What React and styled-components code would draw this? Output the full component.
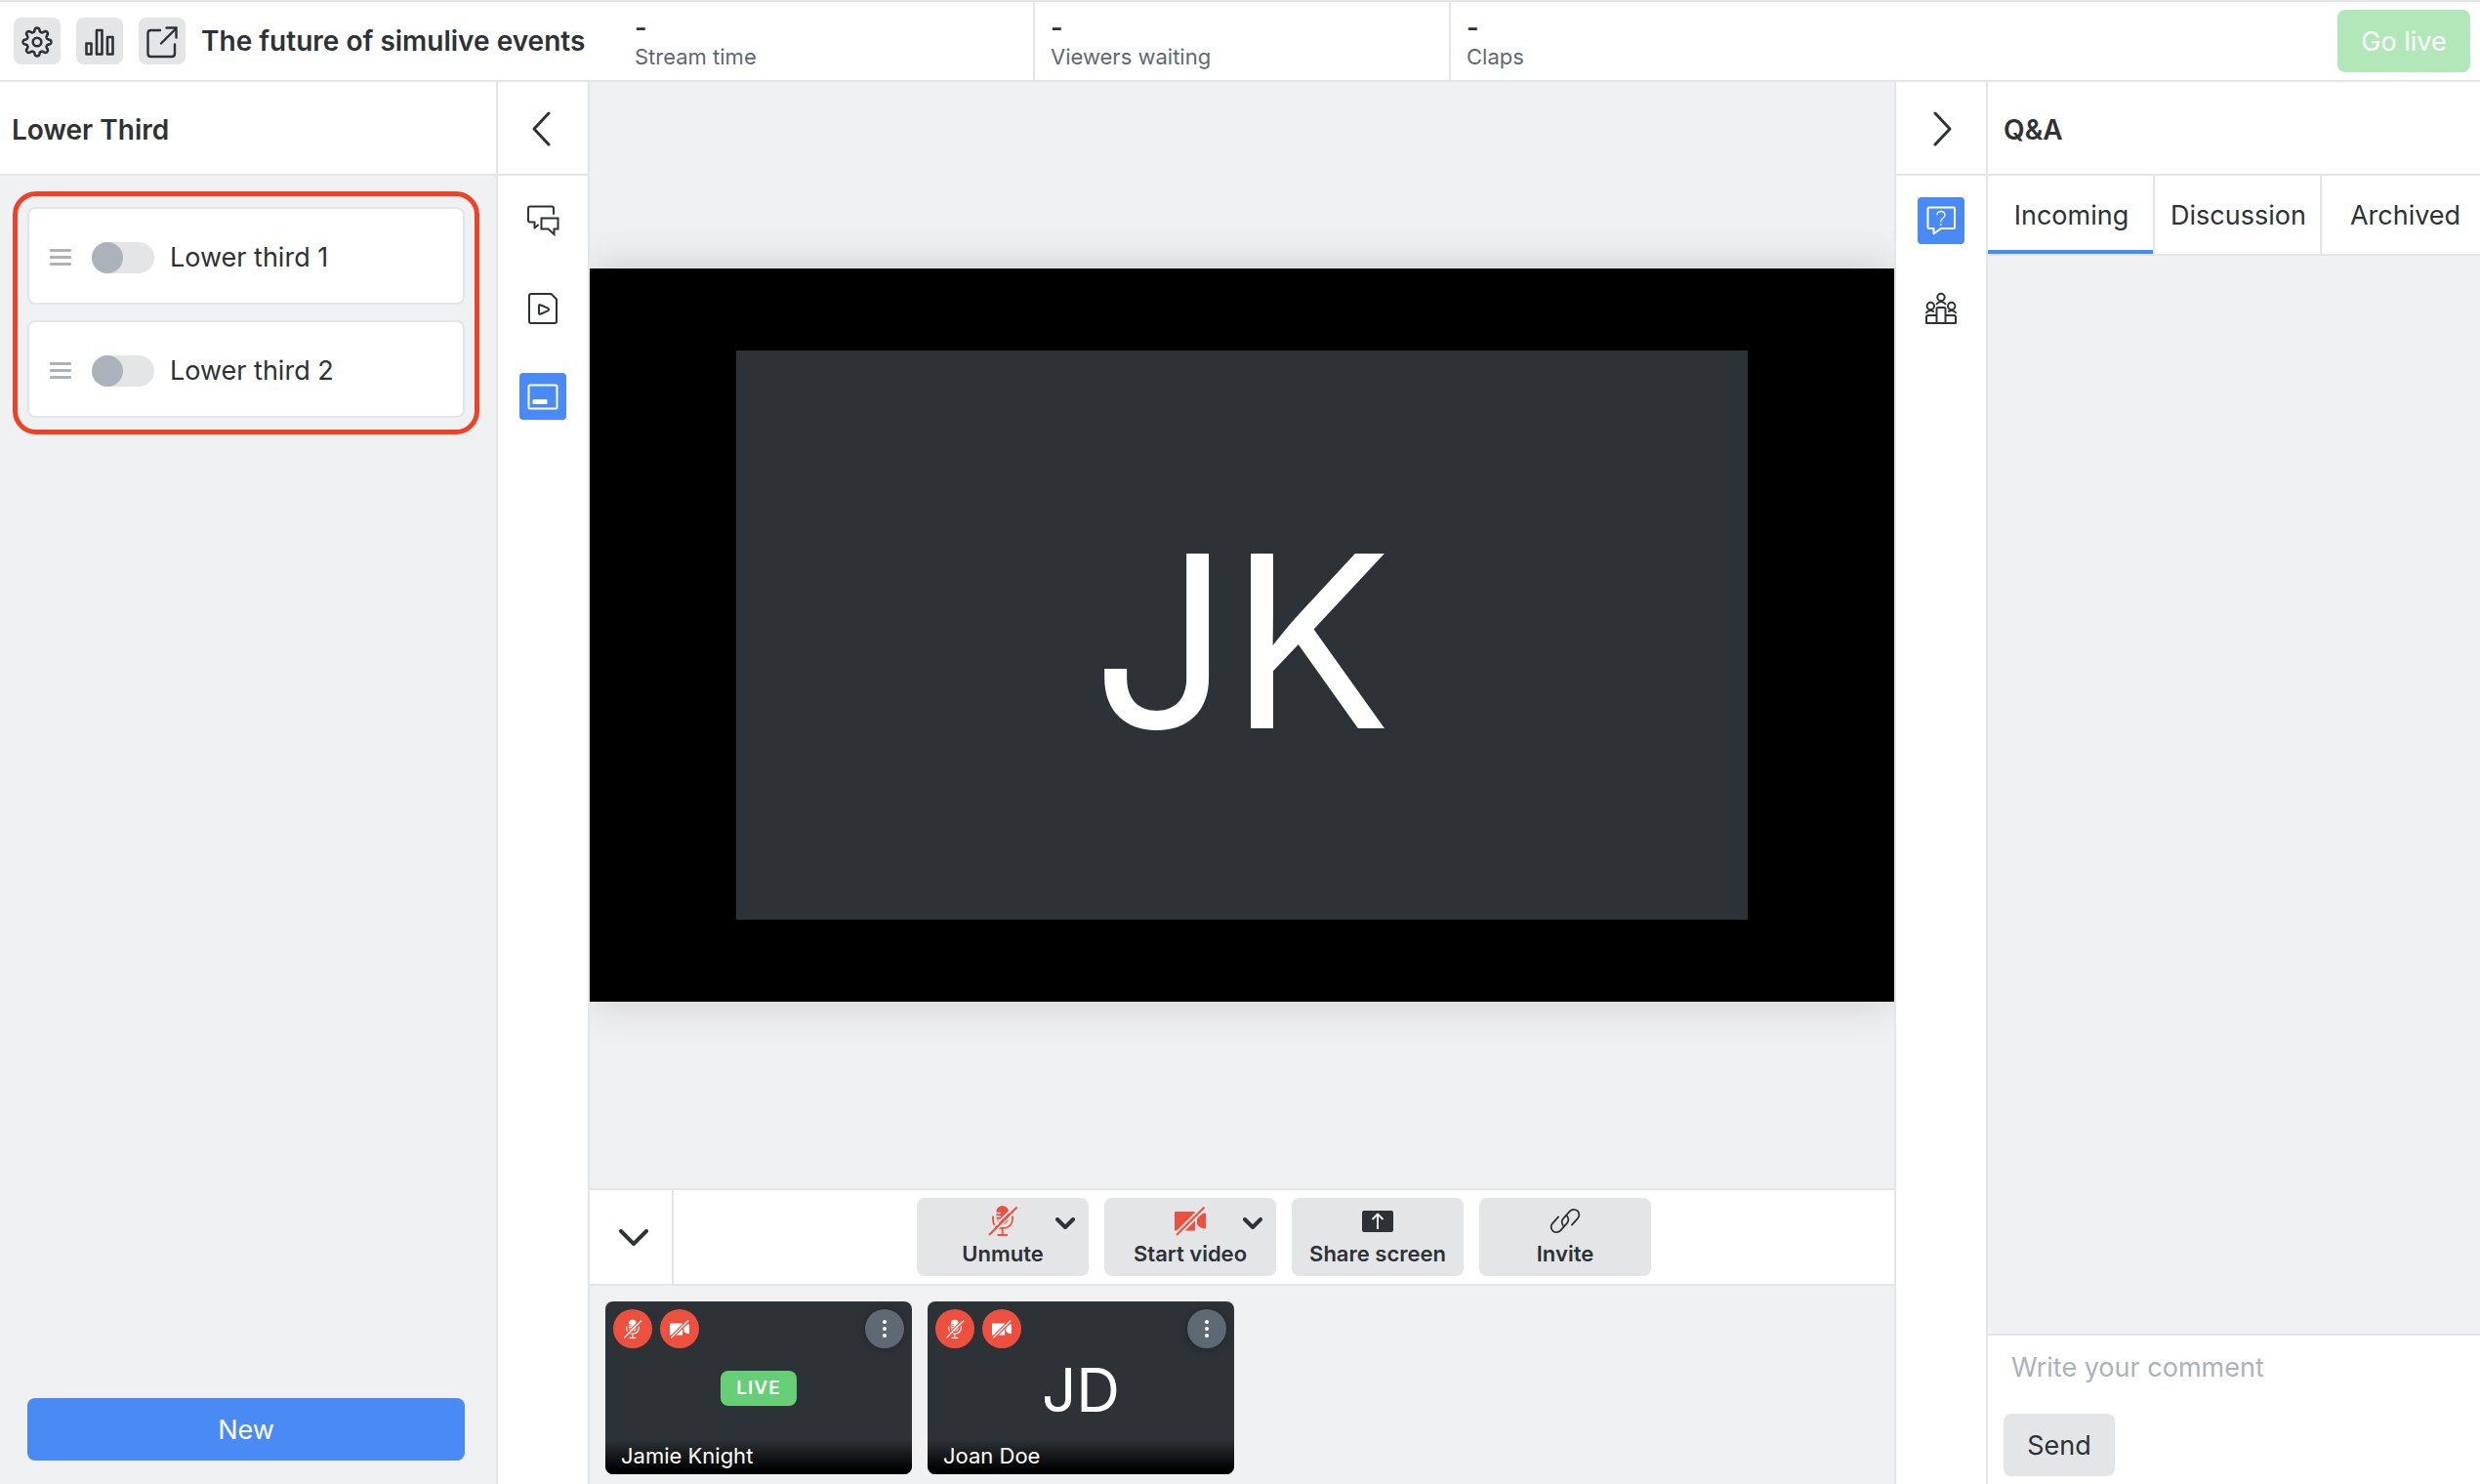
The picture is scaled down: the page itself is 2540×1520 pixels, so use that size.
import React from "react";
import styled, { createGlobalStyle, ThemeProvider } from "styled-components";

const theme = {
  ink: "#2d3236",
  soft: "#5e6973",
  muted: "#abb2ba",
  line: "#e4e5e7",
  panel: "#f0f1f3",
  blue: "#4a8af4",
  red: "#ee5040",
  green: "#66cf75",
  paleGreen: "#b2e7ba",
  marker: "#ee4126",
};

const GlobalStyle = createGlobalStyle`
  *, *::before, *::after { box-sizing: border-box; }
  body {
    margin: 0;
    font-family: Inter, "Liberation Sans", sans-serif;
    font-size: 27px;
    line-height: 32px;
    color: ${theme.ink};
    background: ${theme.panel};
  }
  button, input, textarea { font: inherit; color: inherit; }
  button { border: 0; padding: 0; background: none; cursor: pointer; }
  h1, h2, p, ul { margin: 0; padding: 0; }
  ul { list-style: none; }
  svg { display: block; flex: none; }
`;

/* ---------- page frame ---------- */

const Page = styled.div`
  display: flex;
  flex-direction: column;
  height: 100vh;
  overflow: hidden;
`;

const TopBar = styled.header`
  display: flex;
  align-items: stretch;
  height: 84px;
  flex: none;
  background: #fff;
  border-top: 2px solid ${(p) => p.theme.line};
  border-bottom: 2px solid ${(p) => p.theme.line};
`;

const TopLeft = styled.div`
  display: flex;
  align-items: center;
  gap: 16px;
  width: 634px;
  flex: none;
  padding-left: 14px;
`;

const ToolButton = styled.button`
  width: 48px;
  height: 48px;
  border-radius: 8px;
  background: ${(p) => p.theme.line};
`;

const Title = styled.h1`
  font-size: 28px;
  line-height: 32px;
  font-weight: 600;
  white-space: nowrap;
`;

const Stat = styled.div`
  display: flex;
  flex-direction: column;
  width: 426px;
  padding: 12px 16px 0;
  border-right: 2px solid ${(p) => p.theme.line};
  &:last-of-type { border-right: 0; }
`;

const StatValue = styled.strong`
  font-weight: 600;
  line-height: 30px;
`;

const StatLabel = styled.span`
  font-size: 22px;
  line-height: 28px;
  color: ${(p) => p.theme.soft};
`;

const GoLive = styled.button`
  align-self: center;
  margin-left: auto;
  margin-right: 10px;
  width: 136px;
  height: 64px;
  padding-top: 2px;
  border-radius: 8px;
  color: #fff;
  background: ${(p) => p.theme.paleGreen};
`;

const Body = styled.div`
  display: flex;
  flex: 1;
  min-height: 0;
`;

const SidePanel = styled.section`
  display: flex;
  flex-direction: column;
  flex: none;
  width: ${(p) => p.$width}px;
  overflow: hidden;
`;

const PanelHead = styled.div`
  display: flex;
  align-items: center;
  height: 96px;
  flex: none;
  padding-top: 3px;
  padding-left: ${(p) => p.$inset}px;
  background: #fff;
  border-bottom: 2px solid ${(p) => p.theme.line};
`;

const PanelTitle = styled.h2`
  font-size: 28px;
  line-height: 32px;
  font-weight: 600;
`;

/* ---------- icon rails ---------- */

const Rail = styled.nav`
  display: flex;
  flex-direction: column;
  align-items: center;
  flex: none;
  width: ${(p) => p.$width}px;
  background: #fff;
  border-left: 2px solid ${(p) => p.theme.line};
  border-right: 2px solid ${(p) => p.theme.line};
`;

const RailToggle = styled.button`
  display: flex;
  align-items: center;
  justify-content: center;
  align-self: stretch;
  height: 96px;
  flex: none;
  padding-top: 2px;
  border-bottom: 2px solid ${(p) => p.theme.line};
`;

const RailItems = styled.div`
  display: flex;
  flex-direction: column;
  gap: 42px;
  padding-top: 22px;
`;

const RailButton = styled.button`
  width: 48px;
  height: 48px;
  border-radius: 4px;
  color: ${(p) => (p.$active ? "#fff" : p.theme.ink)};
  background: ${(p) => (p.$active ? p.theme.blue : "transparent")};
`;

/* ---------- lower thirds ---------- */

const LowerList = styled.ul`
  display: flex;
  flex-direction: column;
  gap: 16px;
  margin: 16px 17px 0 13px;
  padding: 11px 10px 12px;
  border: 5px solid ${(p) => p.theme.marker};
  border-radius: 24px;
`;

const LowerCard = styled.li`
  display: flex;
  align-items: center;
  height: 100px;
  padding: 3px 21px 0;
  background: #fff;
  border: 2px solid ${(p) => p.theme.line};
  border-radius: 8px;
`;

const Grip = styled.button`
  display: flex;
  flex-direction: column;
  gap: 4px;
  width: 22px;
  margin-right: 21px;
`;

const GripLine = styled.span`
  height: 3px;
  border-radius: 1px;
  background: ${(p) => p.theme.muted};
`;

const SwitchLabel = styled.label`
  display: flex;
  align-items: center;
  gap: 16px;
`;

const Switch = styled.input`
  appearance: none;
  display: flex;
  width: 64px;
  height: 32px;
  margin: 0;
  border-radius: 16px;
  background: ${(p) => p.theme.line};
  &::before {
    content: "";
    width: 32px;
    height: 32px;
    border-radius: 50%;
    background: ${(p) => p.theme.muted};
  }
  &:checked { justify-content: flex-end; }
`;

const NewButton = styled.button`
  height: 64px;
  margin: auto 32px 24px 28px;
  padding-top: 2px;
  border-radius: 8px;
  color: #fff;
  background: ${(p) => p.theme.blue};
`;

/* ---------- stage ---------- */

const Center = styled.main`
  display: flex;
  flex-direction: column;
  flex: 1;
  min-width: 0;
`;

const Stage = styled.div`
  display: flex;
  align-items: center;
  flex: 1;
  min-height: 0;
  overflow: hidden;
`;

const Canvas = styled.div`
  display: flex;
  align-items: center;
  justify-content: center;
  width: 100%;
  aspect-ratio: 16 / 9;
  background: #000;
  box-shadow: 0 0 44px rgba(0, 0, 0, 0.16);
`;

const Speaker = styled.div`
  display: flex;
  align-items: center;
  justify-content: center;
  width: 77.5%;
  aspect-ratio: 16 / 9;
  padding-top: 12px;
  font-size: 246px;
  line-height: 280px;
  color: #fff;
  background: ${(p) => p.theme.ink};
`;

const Controls = styled.div`
  display: flex;
  height: 100px;
  flex: none;
  background: #fff;
  border-top: 2px solid ${(p) => p.theme.line};
  border-bottom: 2px solid ${(p) => p.theme.line};
`;

const Collapse = styled.button`
  display: flex;
  align-items: center;
  justify-content: center;
  width: 86px;
  padding-top: 2px;
  padding-left: 6px;
  border-right: 2px solid ${(p) => p.theme.line};
`;

const ControlGroup = styled.div`
  display: flex;
  align-items: center;
  justify-content: center;
  flex: 1;
  gap: 16px;
`;

const ControlCell = styled.div`
  display: grid;
  grid-template-columns: 1fr 48px;
  width: 176px;
  height: 80px;
  border-radius: 8px;
  background: ${(p) => p.theme.line};
`;

const ControlButton = styled.button`
  grid-area: 1 / 1 / 2 / 3;
  display: flex;
  flex-direction: column;
  align-items: center;
  padding-top: 7px;
  gap: 4px;
  font-size: 22px;
  line-height: 28px;
  font-weight: 600;
  white-space: nowrap;
`;

const DeviceButton = styled.button`
  grid-area: 1 / 2 / 2 / 3;
  display: flex;
  justify-content: center;
  align-self: start;
  padding: 20px 0;
`;

/* ---------- participants ---------- */

const Strip = styled.div`
  display: flex;
  gap: 16px;
  flex: none;
  padding: 16px 16px 10px;
`;

const Tile = styled.article`
  display: grid;
  width: 314px;
  height: 177px;
  border-radius: 8px;
  overflow: hidden;
  color: #fff;
  background: ${(p) => p.theme.ink};
  > * { grid-area: 1 / 1; }
`;

const TileTop = styled.div`
  display: flex;
  align-self: start;
  gap: 8px;
  padding: 8px;
  z-index: 1;
`;

const Round = styled.button`
  display: flex;
  align-items: center;
  justify-content: center;
  width: 40px;
  height: 40px;
  border-radius: 50%;
  background: ${(p) => (p.$menu ? p.theme.soft : p.theme.red)};
  box-shadow: ${(p) => (p.$menu ? "0 0 8px rgba(0, 0, 0, 0.25)" : "none")};
  margin-left: ${(p) => (p.$menu ? "auto" : "0")};
`;

const LiveBadge = styled.span`
  place-self: center;
  width: 78px;
  border-radius: 8px;
  font-size: 19px;
  line-height: 36px;
  letter-spacing: 1px;
  font-weight: 600;
  text-align: center;
  background: ${(p) => p.theme.green};
`;

const Initials = styled.span`
  place-self: center;
  padding-top: 4px;
  font-size: 62px;
  line-height: 72px;
`;

const TileName = styled.p`
  align-self: end;
  padding: 2px 16px 5px;
  font-size: 22px;
  line-height: 28px;
  background: linear-gradient(transparent, #000 88%);
`;

/* ---------- Q&A ---------- */

const Tabs = styled.div`
  display: flex;
  height: 82px;
  flex: none;
  background: #fff;
  border-bottom: 2px solid ${(p) => p.theme.line};
`;

const Tab = styled.button`
  width: 171px;
  flex: none;
  padding-top: 6px;
  border-bottom: 4px solid ${(p) => (p.$active ? p.theme.blue : "transparent")};
  & + & { box-shadow: -2px 0 0 ${(p) => p.theme.line}; }
`;

const Composer = styled.form`
  display: flex;
  flex-direction: column;
  align-items: flex-start;
  margin-top: auto;
  padding: 0 16px 8px;
  background: #fff;
  border-top: 2px solid ${(p) => p.theme.line};
`;

const CommentBox = styled.textarea`
  display: block;
  width: 100%;
  height: 80px;
  padding: 17px 8px;
  border: 0;
  outline: 0;
  resize: none;
  background: transparent;
  &::placeholder { color: ${(p) => p.theme.muted}; opacity: 1; }
`;

const SendButton = styled.button`
  width: 114px;
  height: 64px;
  padding-top: 2px;
  border-radius: 8px;
  background: ${(p) => p.theme.line};
`;

/* ---------- icons ---------- */

const Line48 = ({ width = 2, children }) => (
  <svg width="48" height="48" viewBox="0 0 48 48" fill="none" stroke="currentColor"
    strokeWidth={width} strokeLinecap="round" strokeLinejoin="round" aria-hidden="true">
    {children}
  </svg>
);

const gearPath = (() => {
  const points = [];
  for (let i = 0; i < 240; i += 1) {
    const a = (i / 240) * Math.PI * 2;
    const r = 12.5 + 2 * Math.tanh(1.6 * Math.cos(8 * a));
    points.push(`${(24 + r * Math.sin(a)).toFixed(2)} ${(25 - r * Math.cos(a)).toFixed(2)}`);
  }
  return `M${points.join("L")}Z`;
})();

const GearIcon = () => (
  <Line48 width={2.6}>
    <path d={gearPath} />
    <circle cx="24" cy="25" r="4.3" />
  </Line48>
);

const BarsIcon = () => (
  <Line48 width={2.6}>
    <rect x="10.5" y="26.5" width="5" height="11" />
    <rect x="21" y="13" width="5.5" height="24.5" />
    <rect x="32" y="20" width="5.5" height="17.5" />
  </Line48>
);

const ExternalIcon = () => (
  <Line48 width={2.4}>
    <path d="M22 13H12.5q-3 0-3 3v21q0 3 3 3h21.5q3 0 3-3V27.5" />
    <path d="M23 26.5 38 11.5" />
    <path d="M28.5 10.500H38.500V20.500" strokeLinejoin="miter" />
  </Line48>
);

const Chevron = ({ w, h, points, stroke }) => (
  <svg width={w} height={h} viewBox={`0 0 ${w} ${h}`} fill="none" stroke={theme.ink}
    strokeWidth={stroke} strokeLinecap="round" strokeLinejoin="round" aria-hidden="true">
    <polyline points={points} />
  </svg>
);

const ChatIcon = () => (
  <Line48>
    <path d="M35 17v-5.500q0-2-2-2H11q-2 0-2 2V23.500q0 2 2 2h4.500V31.500L19 28.500" />
    <path d="M22.500 21.500H39.500V32.500H35.500V38L29.500 32.500H22.500Z" strokeLinejoin="miter" />
  </Line48>
);

const ClipIcon = () => (
  <Line48>
    <path d="M12 9H32.500L38 14.500V37q0 2-2 2H12q-2 0-2-2V11q0-2 2-2Z" />
    <path d="M20 21.500q0-2 2-1l7 3.200q2.200 1.300 0 2.600l-7 3.200q-2 1-2-1Z" />
  </Line48>
);

const LowerThirdIcon = () => (
  <Line48>
    <rect x="9.500" y="12.500" width="29" height="24" rx="1.500" />
    <rect x="13.500" y="27" width="15" height="5" rx="1" fill="currentColor" stroke="none" />
  </Line48>
);

const QuestionIcon = () => (
  <Line48>
    <path d="M12 10.500H36.500q1.500 0 1.500 1.500V30.500q0 1.500-1.500 1.500H24L16.500 37.500V32H12q-1.500 0-1.500-1.500V12q0-1.500 1.500-1.500Z" />
    <path d="M20 17.500q.5-3 4-3t4 3.500q0 2-2.200 3.500T23.800 25" strokeWidth="1.300" />
    <circle cx="23.800" cy="28" r=".9" fill="currentColor" stroke="none" />
  </Line48>
);

const AudienceIcon = () => (
  <Line48>
    <circle cx="24" cy="12.500" r="3.700" />
    <circle cx="13.300" cy="21.500" r="3.700" />
    <circle cx="34.700" cy="21.500" r="3.700" />
    <path d="M19.500 19.300Q21.500 17 24 17T28.500 19.300M9 28.300Q10.500 26 13.300 26 15 26 16 27M32 27Q33 26 34.700 26 37.500 26 39 28.300" />
    <path d="M19.500 39V24.500q0-1.500 1.500-1.500h6q1.500 0 1.500 1.500V39M19.500 31H11q-2 0-2 2v6H39V33q0-2-2-2H28.500" />
  </Line48>
);

const MicOffIcon = ({ size = 32, color, ground }) => (
  <svg width={size} height={size} viewBox="0 0 32 32" fill="none" stroke={color} strokeWidth="1.800" aria-hidden="true">
    <rect x="9.500" y="1" width="12.500" height="19" rx="6.200" fill={color} stroke="none" />
    <path d="M9 8.500h5M9 12h5M9 15.500h4" stroke={ground} strokeWidth="1.300" />
    <path d="M6 11.500v3.500q0 9 9.700 9T26 15v-3.500M15.700 24V31M10.500 31H21" />
    <path d="M32 3.500 4 31.500M29 .500 1 28.500" stroke={ground} strokeWidth="1.800" />
    <path d="M30.500 2.500 2 31" strokeWidth="2.200" />
  </svg>
);

const CameraOffIcon = ({ size = 32, color, ground }) => (
  <svg width={size} height={size} viewBox="0 0 32 32" fill="none" aria-hidden="true">
    <rect x="0" y="7" width="21" height="19.500" rx=".5" fill={color} />
    <path d="M23 13.500Q26 9 31 8.500q1 0 1 1V23.500q0 1-1 1Q26 24 23 20Z" fill={color} />
    <path d="M30.500 2.500 2 31" stroke={ground} strokeWidth="6" />
    <path d="M30.500 2.500 2 31" stroke={color} strokeWidth="2.200" />
  </svg>
);

const ShareIcon = () => (
  <svg width="32" height="32" viewBox="0 0 32 32" fill="none" aria-hidden="true">
    <rect x="0" y="6" width="32" height="22" rx="2" fill={theme.ink} />
    <path d="M16 25V10M10.500 15 16 9.500 21.500 15" stroke="#fff" strokeWidth="1.800" />
  </svg>
);

const LinkIcon = () => (
  <svg width="34" height="32" viewBox="0 0 34 32" fill="none" stroke={theme.ink}
    strokeWidth="1.800" strokeLinecap="round" aria-hidden="true">
    <path transform="translate(11.500 19) rotate(-48)" d="M4 -5.500H-5a5.500 5.500 0 0 0 0 11H5A5.500 5.500 0 0 0 10.500 0" />
    <path transform="translate(22.500 14) rotate(132)" d="M4 -5.500H-5a5.500 5.500 0 0 0 0 11H5A5.500 5.500 0 0 0 10.500 0" />
  </svg>
);

const DotsIcon = () => (
  <svg width="20" height="20" viewBox="0 0 20 20" fill="#fff" aria-hidden="true">
    <circle cx="10" cy="3" r="2" />
    <circle cx="10" cy="10" r="2" />
    <circle cx="10" cy="17" r="2" />
  </svg>
);

/* ---------- data ---------- */

const stats = ["Stream time", "Viewers waiting", "Claps"];
const lowerThirds = ["Lower third 1", "Lower third 2"];
const tabs = ["Incoming", "Discussion", "Archived"];

const controls = [
  { label: "Unmute", icon: <MicOffIcon color={theme.red} ground={theme.line} />, device: "Choose microphone" },
  { label: "Start video", icon: <CameraOffIcon color={theme.red} ground={theme.line} />, device: "Choose camera" },
  { label: "Share screen", icon: <ShareIcon /> },
  { label: "Invite", icon: <LinkIcon /> },
];

const people = [
  { name: "Jamie Knight", live: true },
  { name: "Joan Doe", initials: "JD" },
];

export default function App() {
  return (
    <ThemeProvider theme={theme}>
      <GlobalStyle />
      <Page>
        <TopBar>
          <TopLeft>
            <ToolButton aria-label="Settings"><GearIcon /></ToolButton>
            <ToolButton aria-label="Statistics"><BarsIcon /></ToolButton>
            <ToolButton aria-label="Open event page"><ExternalIcon /></ToolButton>
            <Title>The future of simulive events</Title>
          </TopLeft>
          {stats.map((label) => (
            <Stat key={label}>
              <StatValue>-</StatValue>
              <StatLabel>{label}</StatLabel>
            </Stat>
          ))}
          <GoLive>Go live</GoLive>
        </TopBar>

        <Body>
          <SidePanel $width={508}>
            <PanelHead $inset={12}><PanelTitle>Lower Third</PanelTitle></PanelHead>
            <LowerList>
              {lowerThirds.map((label) => (
                <LowerCard key={label}>
                  <Grip aria-label={`Move ${label}`}>
                    <GripLine /><GripLine /><GripLine />
                  </Grip>
                  <SwitchLabel>
                    <Switch type="checkbox" />
                    {label}
                  </SwitchLabel>
                </LowerCard>
              ))}
            </LowerList>
            <NewButton>New</NewButton>
          </SidePanel>

          <Rail $width={96} aria-label="Left tools">
            <RailToggle aria-label="Collapse left panel">
              <Chevron w={22} h={36} points="17,2 2,18 17,34" stroke={3} />
            </RailToggle>
            <RailItems>
              <RailButton aria-label="Chat"><ChatIcon /></RailButton>
              <RailButton aria-label="Clips"><ClipIcon /></RailButton>
              <RailButton $active aria-label="Lower thirds"><LowerThirdIcon /></RailButton>
            </RailItems>
          </Rail>

          <Center>
            <Stage>
              <Canvas><Speaker>JK</Speaker></Canvas>
            </Stage>
            <Controls>
              <Collapse aria-label="Collapse participants">
                <Chevron w={30} h={18} points="2,2 15,15 28,2" stroke={4} />
              </Collapse>
              <ControlGroup>
                {controls.map(({ label, icon, device }) => (
                  <ControlCell key={label}>
                    <ControlButton>{icon}{label}</ControlButton>
                    {device && (
                      <DeviceButton aria-label={device}>
                        <Chevron w={20} h={13} points="2,2 10,10 18,2" stroke={4} />
                      </DeviceButton>
                    )}
                  </ControlCell>
                ))}
              </ControlGroup>
            </Controls>
            <Strip>
              {people.map(({ name, live, initials }) => (
                <Tile key={name}>
                  <TileTop>
                    <Round aria-label="Microphone off">
                      <MicOffIcon size={20} color="#fff" ground={theme.red} />
                    </Round>
                    <Round aria-label="Camera off">
                      <CameraOffIcon size={20} color="#fff" ground={theme.red} />
                    </Round>
                    <Round $menu aria-label={`Options for ${name}`}><DotsIcon /></Round>
                  </TileTop>
                  {live ? <LiveBadge>LIVE</LiveBadge> : <Initials>{initials}</Initials>}
                  <TileName>{name}</TileName>
                </Tile>
              ))}
            </Strip>
          </Center>

          <Rail $width={96} aria-label="Right tools">
            <RailToggle aria-label="Collapse right panel">
              <Chevron w={22} h={36} points="5,2 20,18 5,34" stroke={3} />
            </RailToggle>
            <RailItems>
              <RailButton $active aria-label="Questions"><QuestionIcon /></RailButton>
              <RailButton aria-label="Audience"><AudienceIcon /></RailButton>
            </RailItems>
          </Rail>

          <SidePanel $width={504}>
            <PanelHead $inset={16}><PanelTitle>Q&amp;A</PanelTitle></PanelHead>
            <Tabs role="tablist">
              {tabs.map((label, i) => (
                <Tab key={label} role="tab" aria-selected={i === 0} $active={i === 0}>{label}</Tab>
              ))}
            </Tabs>
            <Composer onSubmit={(e) => e.preventDefault()}>
              <CommentBox aria-label="Comment" placeholder="Write your comment" />
              <SendButton>Send</SendButton>
            </Composer>
          </SidePanel>
        </Body>
      </Page>
    </ThemeProvider>
  );
}
